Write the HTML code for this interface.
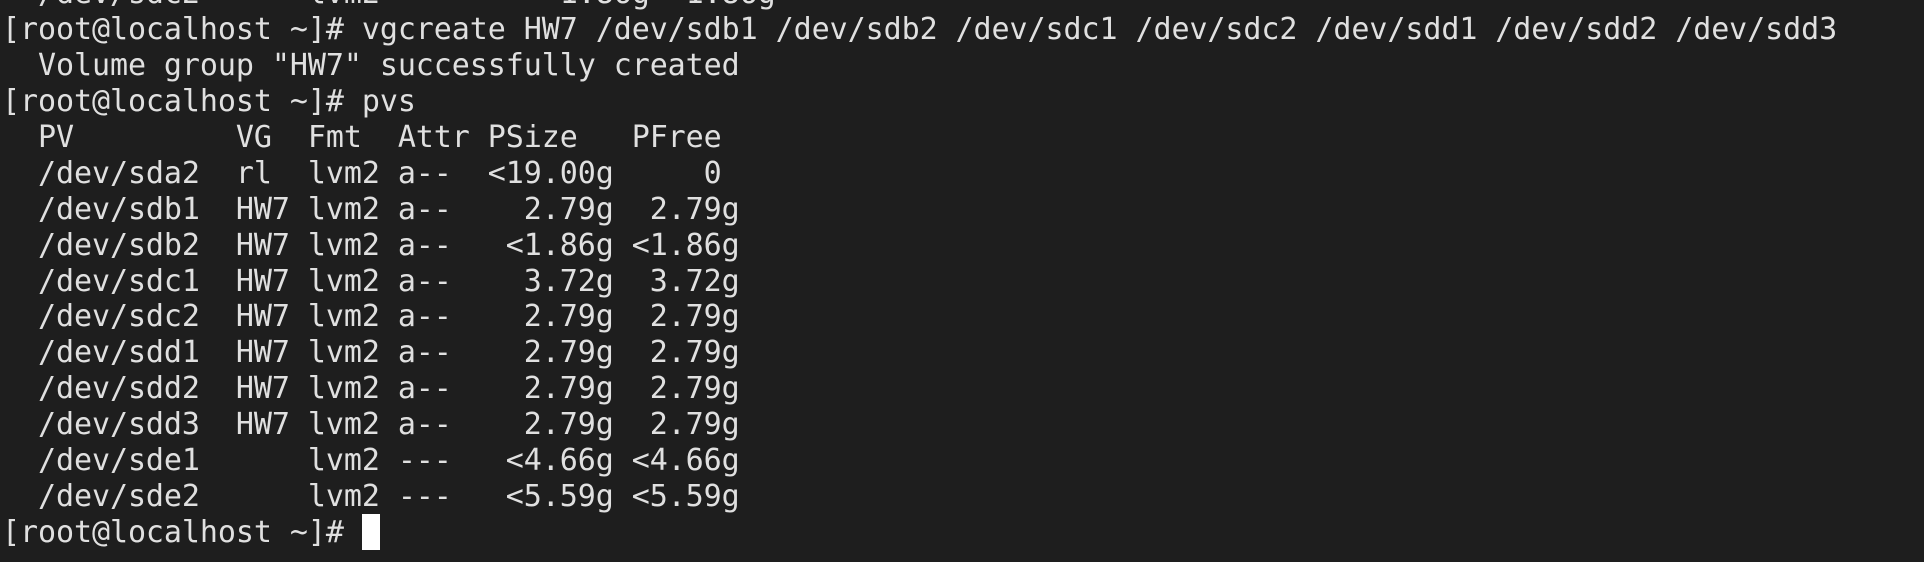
<!DOCTYPE html>
<html><head><meta charset="utf-8"><style>
html,body{margin:0;padding:0;background:#1e1e1e;width:1924px;height:562px;overflow:hidden}
pre{position:absolute;left:2px;top:-24px;margin:0;font-family:"DejaVu Sans Mono","Liberation Mono",monospace;font-size:30px;letter-spacing:-0.07px;line-height:35.93px;color:#e0e0e0;white-space:pre}
.cur{position:absolute;left:362px;top:514px;width:18px;height:36px;background:#fff}
</style></head><body>
<pre>  /dev/sdc2      lvm2          1.86g  1.86g
[root@localhost ~]# vgcreate HW7 /dev/sdb1 /dev/sdb2 /dev/sdc1 /dev/sdc2 /dev/sdd1 /dev/sdd2 /dev/sdd3
  Volume group "HW7" successfully created
[root@localhost ~]# pvs
  PV         VG  Fmt  Attr PSize   PFree
  /dev/sda2  rl  lvm2 a--  &lt;19.00g     0
  /dev/sdb1  HW7 lvm2 a--    2.79g  2.79g
  /dev/sdb2  HW7 lvm2 a--   &lt;1.86g &lt;1.86g
  /dev/sdc1  HW7 lvm2 a--    3.72g  3.72g
  /dev/sdc2  HW7 lvm2 a--    2.79g  2.79g
  /dev/sdd1  HW7 lvm2 a--    2.79g  2.79g
  /dev/sdd2  HW7 lvm2 a--    2.79g  2.79g
  /dev/sdd3  HW7 lvm2 a--    2.79g  2.79g
  /dev/sde1      lvm2 ---   &lt;4.66g &lt;4.66g
  /dev/sde2      lvm2 ---   &lt;5.59g &lt;5.59g
[root@localhost ~]# </pre>
<div class="cur"></div>
</body></html>
